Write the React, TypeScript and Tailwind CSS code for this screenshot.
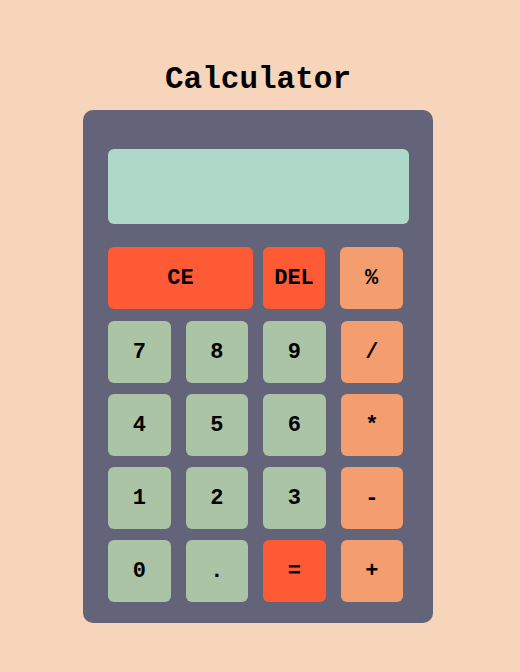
type Kind = "num" | "op" | "red";

const rows: { label: string; kind: Kind }[][] = [
  [
    { label: "7", kind: "num" },
    { label: "8", kind: "num" },
    { label: "9", kind: "num" },
    { label: "/", kind: "op" },
  ],
  [
    { label: "4", kind: "num" },
    { label: "5", kind: "num" },
    { label: "6", kind: "num" },
    { label: "*", kind: "op" },
  ],
  [
    { label: "1", kind: "num" },
    { label: "2", kind: "num" },
    { label: "3", kind: "num" },
    { label: "-", kind: "op" },
  ],
  [
    { label: "0", kind: "num" },
    { label: ".", kind: "num" },
    { label: "=", kind: "red" },
    { label: "+", kind: "op" },
  ],
];

const colors: Record<Kind, string> = {
  num: "bg-[#abc4a5]",
  op: "bg-[#f49d6e]",
  red: "bg-[#ff5a36]",
};

const keyBase = "h-[62px] rounded-md text-[22px] font-bold text-black flex items-center justify-center";

export default function App() {
  return (
    <div className="min-h-[672px] bg-[#f6d5ba] font-['Liberation_Mono',monospace] flex flex-col items-center pr-1 pt-[62px]">
      <h1 className="text-[31px] leading-[36px] font-bold text-black">Calculator</h1>
      <div className="mt-[12px] w-[350px] rounded-[10px] bg-[#636479] pl-[25px] pt-[39px] pb-[21px]">
        <div className="h-[75px] w-[301px] rounded-md bg-[#aed9c8]" />
        <div className="mt-[23px] flex w-[295px]">
          <button className={`${keyBase} w-[145px] ${colors.red}`}>CE</button>
          <button className={`${keyBase} ml-[10px] w-[62px] ${colors.red}`}>DEL</button>
          <button className={`${keyBase} ml-[15px] w-[63px] ${colors.op}`}>%</button>
        </div>
        <div className="mt-[12px] grid w-[295px] grid-cols-4 gap-x-[15px] gap-y-[11px]">
          {rows.flat().map((k) => (
            <button key={k.label} className={`${keyBase} ${colors[k.kind]}`}>
              {k.label}
            </button>
          ))}
        </div>
      </div>
    </div>
  );
}
